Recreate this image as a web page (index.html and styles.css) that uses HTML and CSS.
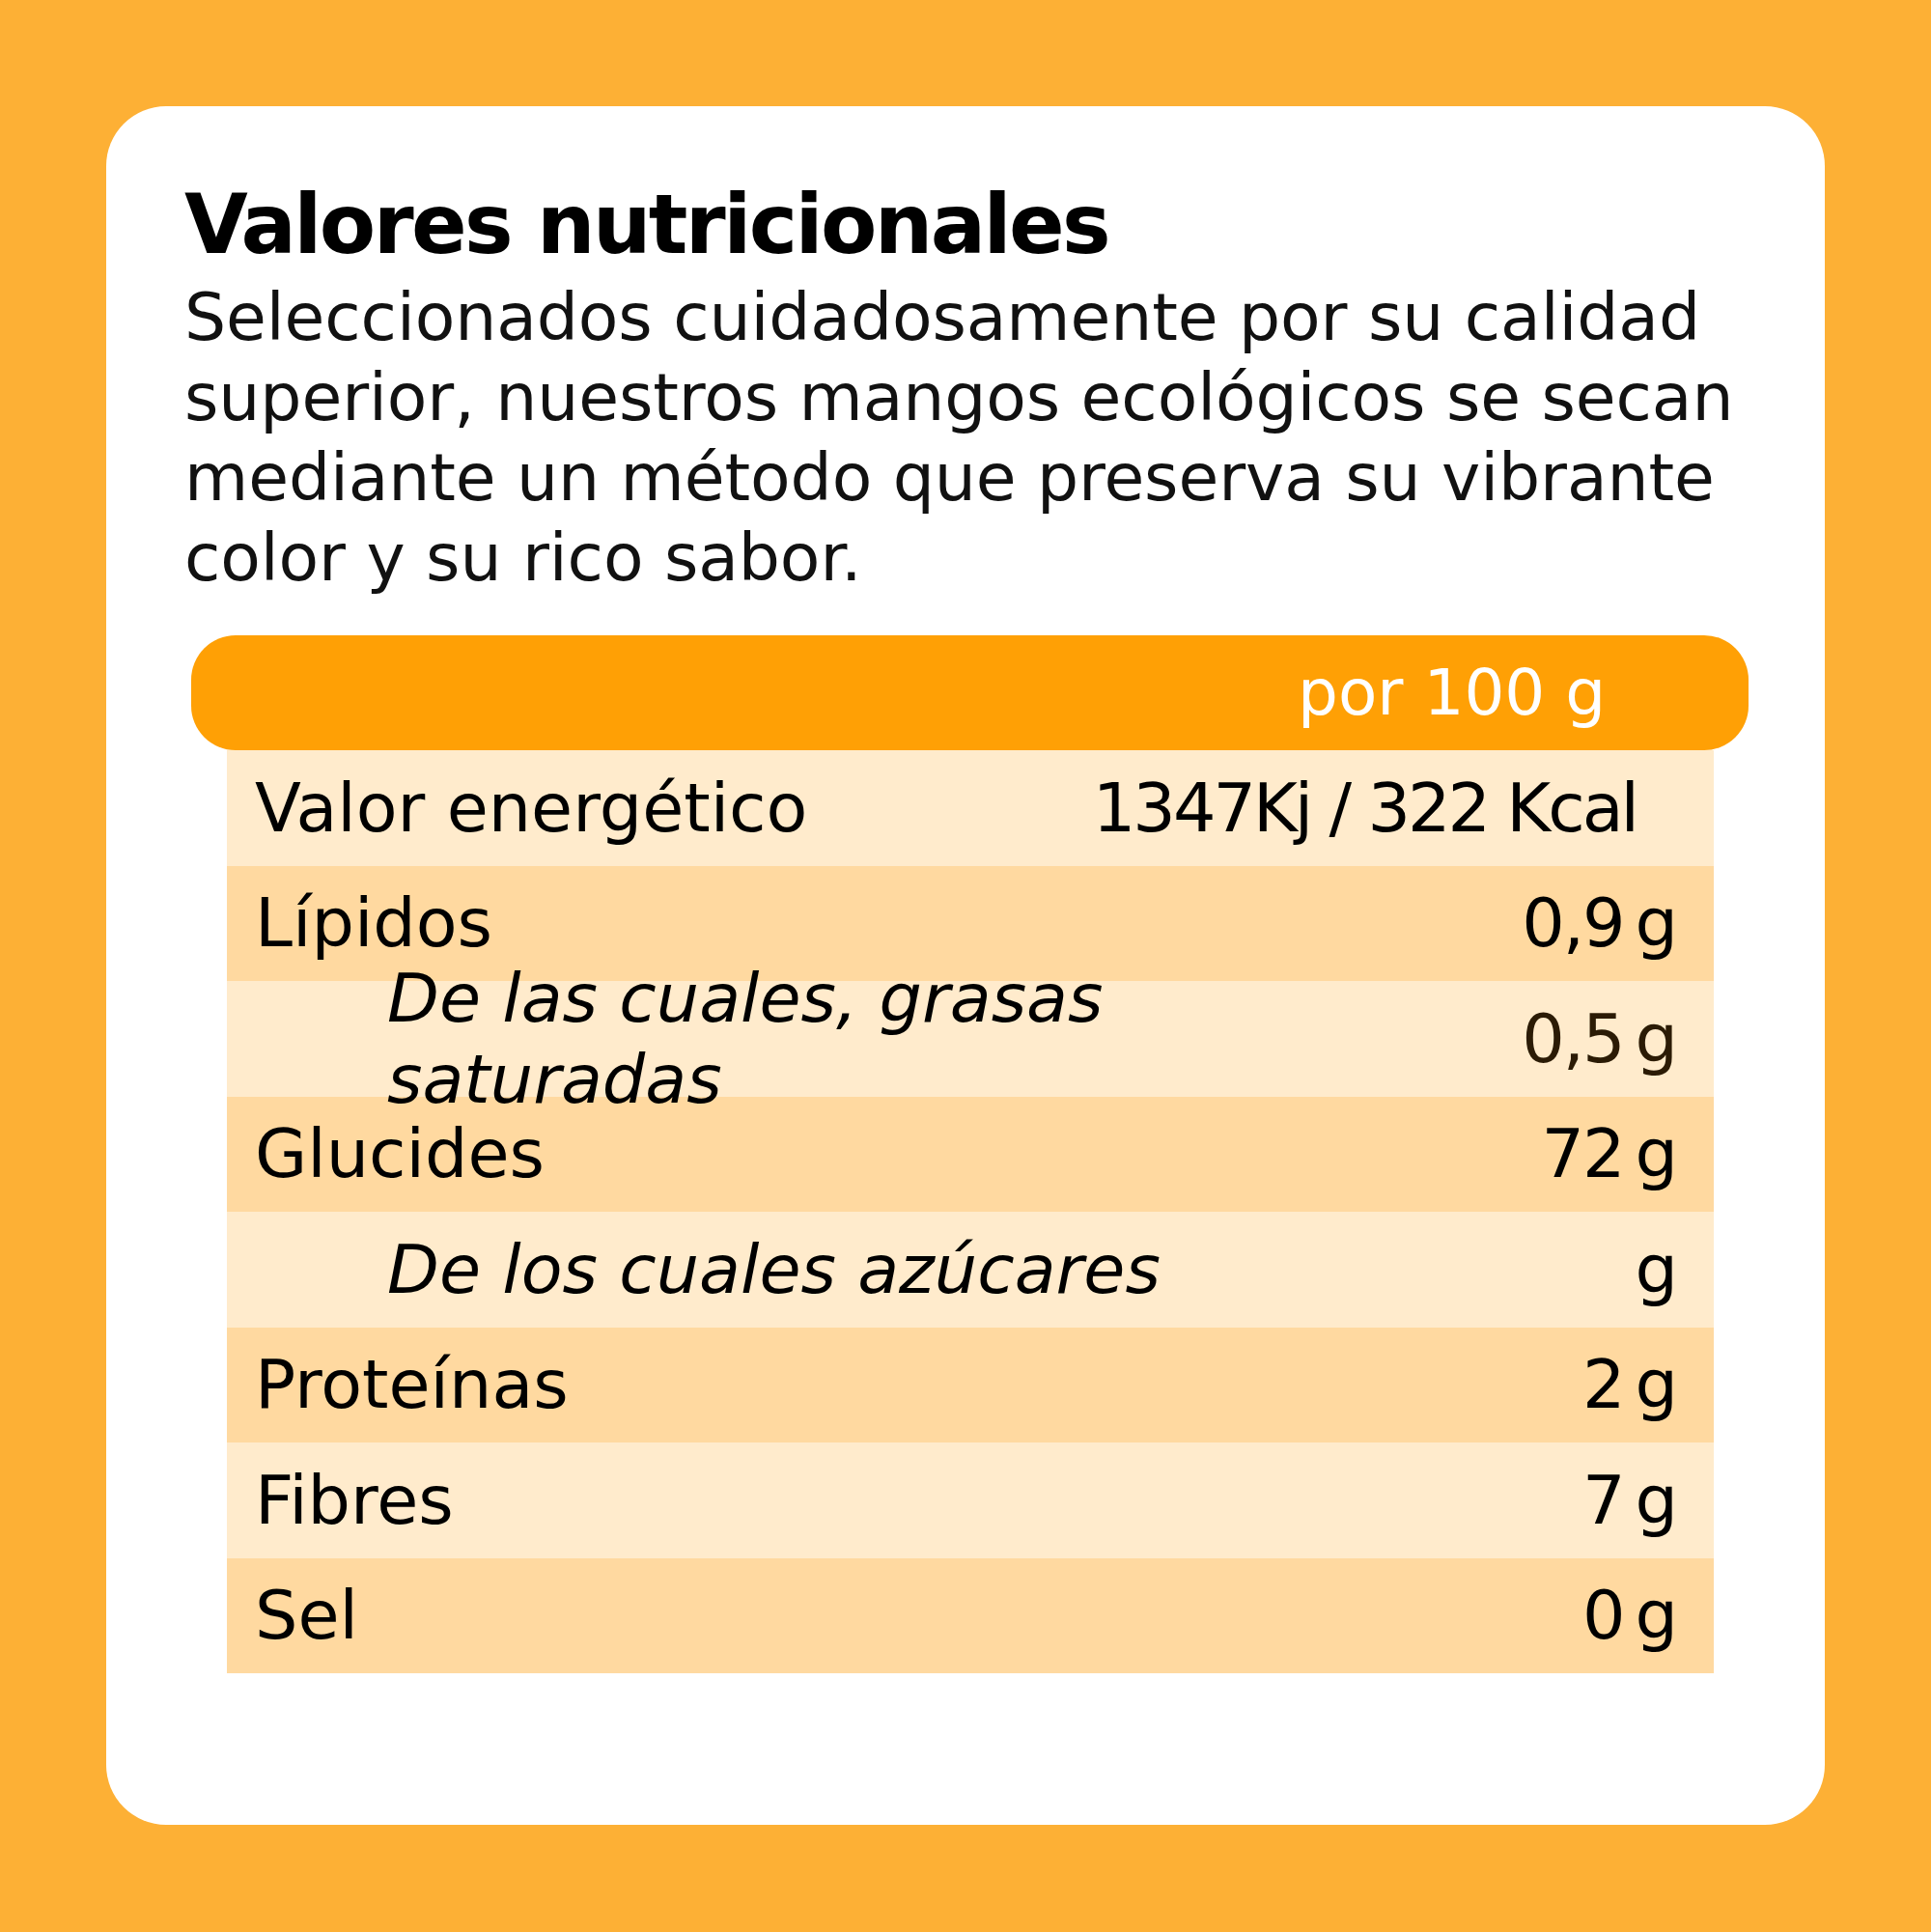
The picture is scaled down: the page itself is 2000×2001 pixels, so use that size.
FILE: index.html
```html
<!DOCTYPE html>
<html lang="es">
<head>
<meta charset="utf-8">
<title>Valores nutricionales</title>
<link rel="stylesheet" href="styles.css">
</head>
<body>
<div class="card">
  <h1 class="title">Valores nutricionales</h1>
  <p class="intro">Seleccionados cuidadosamente por su calidad superior, nuestros mangos ecológicos se secan mediante un método que preserva su vibrante color y su rico sabor.</p>
  <div class="table">
    <div class="head"><span class="head-text">por 100 g</span></div>
    <div class="rows">
      <div class="row light"><span class="label">Valor energético</span><span class="energy">1347Kj / 322 Kcal</span></div>
      <div class="row dark"><span class="label">Lípidos</span><span class="value"><span class="num">0,9</span><span class="unit">g</span></span></div>
      <div class="row light sub"><span class="label">De las cuales, grasas<br>saturadas</span><span class="value brown"><span class="num">0,5</span><span class="unit">g</span></span></div>
      <div class="row dark"><span class="label">Glucides</span><span class="value"><span class="num">72</span><span class="unit">g</span></span></div>
      <div class="row light sub"><span class="label">De los cuales azúcares</span><span class="value"><span class="num"></span><span class="unit">g</span></span></div>
      <div class="row dark"><span class="label">Proteínas</span><span class="value"><span class="num">2</span><span class="unit">g</span></span></div>
      <div class="row light"><span class="label">Fibres</span><span class="value"><span class="num">7</span><span class="unit">g</span></span></div>
      <div class="row dark"><span class="label">Sel</span><span class="value"><span class="num">0</span><span class="unit">g</span></span></div>
    </div>
  </div>
</div>
</body>
</html>
```
FILE: styles.css
```css
html, body {
  margin: 0;
  padding: 0;
}
body {
  background: #fdb035;
  width: 2000px;
  height: 2001px;
  font-family: "DejaVu Sans", "Noto Sans", sans-serif;
  color: #000;
}
.card {
  box-sizing: border-box;
  margin: 110px 0 0 110px;
  width: 1780px;
  height: 1780px;
  background: #fff;
  border-radius: 62px;
  padding: 80px 81px 0 81px;
}
.title {
  margin: 0;
  font-size: 85px;
  line-height: 85px;
  font-weight: 700;
  letter-spacing: -2.6px;
}
.intro {
  margin: 12px 0 0 0;
  font-size: 68px;
  line-height: 83px;
  letter-spacing: -0.1px;
  color: #111;
}
.table {
  margin-top: 39px;
}
.head {
  margin-left: 7px;
  width: 1613px;
  height: 119px;
  background: #ffa005;
  border-radius: 46px;
  display: flex;
  align-items: center;
  box-sizing: border-box;
  padding-left: 1146px;
}
.head-text {
  color: #fff;
  font-size: 66px;
  line-height: 80px;
  white-space: nowrap;
}
.rows {
  margin-left: 44px;
  width: 1540px;
}
.row {
  height: 119.5px;
  display: flex;
  align-items: center;
  justify-content: space-between;
  box-sizing: border-box;
  padding: 0 37px 0 29px;
  font-size: 70px;
  line-height: 84px;
  white-space: nowrap;
}
.light { background: #ffebcc; }
.dark { background: #ffd9a0; }
.sub { padding-left: 166px; }
.sub .label { font-style: italic; }
.energy {
  margin-right: 43px;
  letter-spacing: -3px;
}
.value {
  display: flex;
  gap: 12px;
}
.num {
  letter-spacing: -2px;
}
.brown { color: #2b1b05; }
```
